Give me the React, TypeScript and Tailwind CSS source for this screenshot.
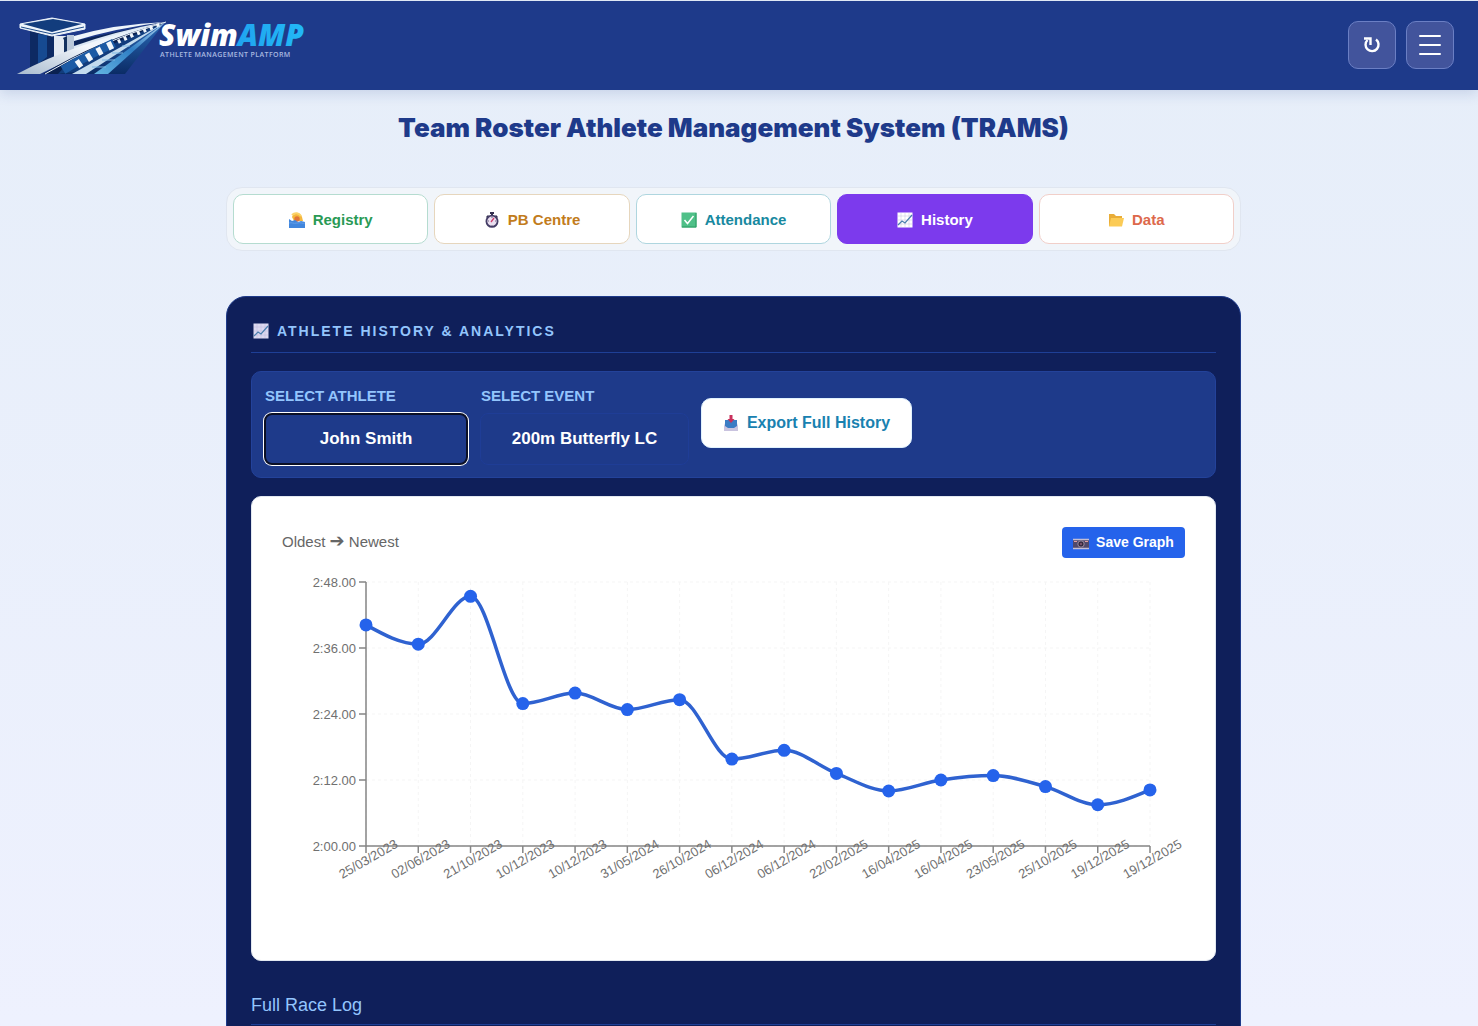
import React from 'react';
import clsx from 'clsx';

const RACES = [
  { date: '25/03/2023', seconds: 160.2 },
  { date: '02/06/2023', seconds: 156.7 },
  { date: '21/10/2023', seconds: 165.4 },
  { date: '10/12/2023', seconds: 145.9 },
  { date: '10/12/2023', seconds: 147.8 },
  { date: '31/05/2024', seconds: 144.8 },
  { date: '26/10/2024', seconds: 146.6 },
  { date: '06/12/2024', seconds: 135.8 },
  { date: '06/12/2024', seconds: 137.4 },
  { date: '22/02/2025', seconds: 133.2 },
  { date: '16/04/2025', seconds: 130.0 },
  { date: '16/04/2025', seconds: 132.0 },
  { date: '23/05/2025', seconds: 132.8 },
  { date: '25/10/2025', seconds: 130.8 },
  { date: '19/12/2025', seconds: 127.5 },
  { date: '19/12/2025', seconds: 130.2 },
];

const Y_TICKS = [
  { label: '2:48.00', seconds: 168 },
  { label: '2:36.00', seconds: 156 },
  { label: '2:24.00', seconds: 144 },
  { label: '2:12.00', seconds: 132 },
  { label: '2:00.00', seconds: 120 },
];

const PLOT = { left: 84, right: 868, top: 8, bottom: 272 };

const xAt = (i: number) => PLOT.left + (i * (PLOT.right - PLOT.left)) / (RACES.length - 1);
const yAt = (s: number) => PLOT.bottom - ((s - 120) / 48) * (PLOT.bottom - PLOT.top);

// monotone cubic, so the line never overshoots a result
function monotonePath(points: number[][]) {
  const n = points.length;
  const slope = points.slice(1).map((p, i) => (p[1] - points[i][1]) / (p[0] - points[i][0]));
  const tangent = points.map((_, i) => {
    if (i === 0 || i === n - 1) return 0;
    const a = slope[i - 1];
    const b = slope[i];
    if (a * b <= 0) return 0;
    return Math.sign(a) * Math.min(Math.abs(a), Math.abs(b), Math.abs(a + b) / 4) * 2;
  });
  tangent[0] = (3 * slope[0] - tangent[1]) / 2;
  tangent[n - 1] = (3 * slope[n - 2] - tangent[n - 2]) / 2;

  let d = `M${points[0][0]},${points[0][1]}`;
  for (let i = 1; i < n; i++) {
    const [x0, y0] = points[i - 1];
    const [x1, y1] = points[i];
    const dx = (x1 - x0) / 3;
    d += `C${x0 + dx},${y0 + dx * tangent[i - 1]},${x1 - dx},${y1 - dx * tangent[i]},${x1},${y1}`;
  }
  return d;
}

const HistoryChart: React.FC = () => {
  const points = RACES.map((race, i) => [xAt(i), yAt(race.seconds)]);
  return (
    <svg viewBox="0 0 903 356" className="mt-4 block w-full" role="img" aria-label="Race times">
      <g stroke="#f5f5f5" strokeDasharray="3 3">
        {Y_TICKS.map((t) => (
          <line key={t.label} x1={PLOT.left} x2={PLOT.right} y1={yAt(t.seconds)} y2={yAt(t.seconds)} />
        ))}
        {points.map(([x], i) => (
          <line key={i} x1={x} x2={x} y1={PLOT.top} y2={PLOT.bottom} />
        ))}
      </g>
      <g stroke="#858585" strokeWidth="1.5">
        <line x1={PLOT.left} x2={PLOT.left} y1={PLOT.top} y2={PLOT.bottom} />
        <line x1={PLOT.left} x2={PLOT.right} y1={PLOT.bottom} y2={PLOT.bottom} />
        {Y_TICKS.map((t) => (
          <line key={t.label} x1={PLOT.left - 7} x2={PLOT.left} y1={yAt(t.seconds)} y2={yAt(t.seconds)} />
        ))}
        {points.map(([x], i) => (
          <line key={i} x1={x} x2={x} y1={PLOT.bottom} y2={PLOT.bottom + 7} />
        ))}
      </g>
      <g fill="#707070" fontSize="13">
        {Y_TICKS.map((t) => (
          <text key={t.label} x={PLOT.left - 10} y={yAt(t.seconds) + 5} textAnchor="end">
            {t.label}
          </text>
        ))}
        {RACES.map((race, i) => {
          const x = xAt(i);
          return (
            <text key={i} x={x} y={290} textAnchor="middle" transform={`rotate(-30 ${x} 281)`}>
              {race.date}
            </text>
          );
        })}
      </g>
      <path d={monotonePath(points)} fill="none" stroke="#2f62d0" strokeWidth="3.5" />
      {points.map(([x, y], i) => (
        <circle key={i} cx={x} cy={y} r="6.5" fill="#2563eb" />
      ))}
    </svg>
  );
};

const Logo: React.FC = () => (
  <svg viewBox="0 3 300 66" className="h-[66px] w-[300px]" role="img" aria-label="SwimAMP">
    <defs>
      <linearGradient id="amp" x1="0" y1="0" x2="1" y2="0">
        <stop offset="0" stopColor="#1e8fe8" />
        <stop offset="1" stopColor="#22b8f6" />
      </linearGradient>
      <linearGradient id="deck" x1="0" y1="1" x2="1" y2="0">
        <stop offset="0" stopColor="#a9bccf" />
        <stop offset="0.5" stopColor="#f4f8fc" />
        <stop offset="1" stopColor="#dbe9f6" />
      </linearGradient>
      <linearGradient id="lane" x1="0" y1="1" x2="1" y2="0">
        <stop offset="0" stopColor="#63b4e2" />
        <stop offset="0.5" stopColor="#2f7ec4" />
        <stop offset="1" stopColor="#b5d8f2" />
      </linearGradient>
      <linearGradient id="water" x1="0" y1="0" x2="0" y2="1">
        <stop offset="0" stopColor="#2a6ab8" />
        <stop offset="1" stopColor="#0b2c66" />
      </linearGradient>
    </defs>
    {/* starting block */}
    <path d="M14 22v38h8l17-13V26z" fill="#0d2a63" />
    <path d="M22 25v30l9-7V26z" fill="#164a91" />
    <path d="M38 27h19v20l-19 8z" fill="#e3eaf2" />
    <path d="M51 26h7v20l-7 3z" fill="#b9c8da" />
    <path d="M47 29l4-2v17h-3V31z" fill="#12305f" />
    <path d="M4 15l32-6 33 6v5L36 27 4 19z" fill="#eef5fb" stroke="#eef5fb" />
    <path d="M7 15l30-5 29 5-30 8z" fill="#123d7d" />
    <path d="M5 18l31 7 32-7" fill="none" stroke="#1d4b89" />
    {/* lanes */}
    <path d="M149 13L109 65H38z" fill="url(#water)" />
    <path d="M58 32L148 13 60 46z" fill="#0b2559" />
    <path d="M58 27Q100 15 149 13 100 19 58 32z" fill="#eef5fb" />
    <path d="M58 37Q100 22 149 13 100 26 58 41z" fill="#dce8f4" />
    <path d="M1 65Q60 33 150 13 70 42 24 65z" fill="url(#deck)" />
    <path d="M27 65Q80 32 150 13L46 65z" fill="#0a2150" />
    <path d="M29 65Q82 33 150 13" fill="none" stroke="#e7f0f8" />
    <path d="M42 65L52 54 104 32 146 14 110 36 66 62z" fill="#123d7d" />
    <path d="M47 61Q70 47 98 34" fill="none" stroke="#1c5ba5" strokeWidth="9" />
    <path d="M61 56Q78 44 100 34" fill="none" stroke="#f2f7fb" strokeWidth="8" strokeDasharray="5 7" />
    <path d="M102 33Q120 24 146 15" fill="none" stroke="#f2f7fb" strokeWidth="4" strokeDasharray="3 4" />
    <path d="M56 65L150 13 70 65z" fill="#c3dbee" />
    <path d="M78 65L150 13 92 65z" fill="url(#lane)" />
    <path d="M76 58h14M86 51h13M96 44h11M106 37h8" stroke="#7db9e4" />
    {/* wordmark */}
    <g fontFamily="'Open Sans', sans-serif" fontWeight="800" fontStyle="italic" fontSize="30">
      <text x="143" y="37" fill="#ffffff">
        Swim<tspan fill="url(#amp)">AMP</tspan>
      </text>
    </g>
    <text x="144" y="48" fill="#a9b9e0" fontFamily="'Open Sans', sans-serif" fontWeight="600" fontSize="7" letterSpacing="0.4">
      ATHLETE MANAGEMENT PLATFORM
    </text>
  </svg>
);

const SwimmerIcon = () => (
  <svg viewBox="0 0 16 16" className="h-4 w-4" aria-hidden="true">
    <path d="M3 5c1-4 8-5 10 0l1 4H5z" fill="#f5b83d" />
    <path d="M3 3c3-3 7-2 9 1" fill="none" stroke="#fbd46b" strokeWidth="2" />
    <circle cx="8" cy="7" r="2.7" fill="#e0743a" />
    <path d="M0 7l3 2 3-1 3 2 3-1 4 1v6H0z" fill="#4186dd" />
    <path d="M0 11c3-1 4 1 8 0s5 1 8 0" fill="none" stroke="#639fe8" />
  </svg>
);

const StopwatchIcon = () => (
  <svg viewBox="0 0 16 16" className="h-4 w-4" aria-hidden="true">
    <path d="M6 0h4v2H6zM7 2h2v2H7zM12 3l2 2-1 1-2-2zM4 3L2 5l1 1 2-2z" fill="#34304f" />
    <circle cx="8" cy="9.3" r="5.6" fill="#eadff0" stroke="#443d66" strokeWidth="1.8" />
    <path d="M8 5v1M8 13v1M4 9h1M11 9h1" stroke="#6c6482" />
    <path d="M7 10l3-4" stroke="#cf3d6c" strokeWidth="1.3" />
  </svg>
);

const CheckIcon = () => (
  <svg viewBox="0 0 16 16" className="h-4 w-4" aria-hidden="true">
    <rect width="15" height="15" x="0.5" y="0.5" fill="#4fc088" />
    <path d="M1 15h14V1" fill="none" stroke="#2b9b62" />
    <path d="M3.500 8l3 3.500L12.500 4" fill="none" stroke="#fff" strokeWidth="1.5" />
  </svg>
);

const TrendIcon = ({ className }: { className?: string }) => (
  <svg viewBox="0 0 16 16" className={clsx('h-4 w-4', className)} aria-hidden="true">
    <rect width="15" height="15" x="0.5" y="0.5" fill="currentColor" />
    <path d="M4 1v14M8 1v14M12 1v14M1 4h14M1 8h14M1 12h14" stroke="#b9b3d6" strokeWidth="0.4" />
    <path d="M1 13l4-4 3 2 7-8" fill="none" stroke="#4a7fae" strokeWidth="1.2" />
  </svg>
);

const FolderIcon = () => (
  <svg viewBox="0 0 16 16" className="h-4 w-4" aria-hidden="true">
    <path d="M1 2h5l2 2h6v10H1z" fill="#e9ad38" />
    <path d="M3 6h13l-2 8.500H1z" fill="#fbcb56" />
  </svg>
);

const InboxIcon = () => (
  <svg viewBox="0 0 16 16" className="h-4 w-4" aria-hidden="true">
    <path d="M3 5h10l2 6v5H1v-5z" fill="#c9c3df" />
    <path d="M2 5h12v6l-3 2H5l-3-2z" fill="#3b7cc4" />
    <path d="M6.500 0h3v4h2L8 8 4.500 4h2z" fill="#c9315c" />
  </svg>
);

const CameraIcon = () => (
  <svg viewBox="0 0 16 16" className="h-4 w-4" aria-hidden="true">
    <path d="M0 5h16v10H0z" fill="#51496a" />
    <path d="M0 5.500h16M0 14.500h16" stroke="#c5bfd4" strokeWidth="1.3" />
    <path d="M1 7h3v1H1zM12 7h3v1h-3z" fill="#e6a0a0" />
    <circle cx="8" cy="10" r="3.2" fill="#33293c" stroke="#9d8ea5" />
    <circle cx="8" cy="10" r="1.2" fill="#7a506a" />
  </svg>
);

const TABS = [
  { label: 'Registry', icon: <SwimmerIcon />, className: 'border-[#b5dcd0] bg-white text-[#2a9a55]' },
  { label: 'PB Centre', icon: <StopwatchIcon />, className: 'border-[#e6d6bd] bg-white text-[#c27c1c]' },
  { label: 'Attendance', icon: <CheckIcon />, className: 'border-[#afd6df] bg-white text-[#1889a0]' },
  { label: 'History', icon: <TrendIcon className="text-white" />, className: 'border-[#7c3aed] bg-[#7c3aed] text-white' },
  { label: 'Data', icon: <FolderIcon />, className: 'border-[#f1cfc9] bg-white text-[#dd694b]' },
];

const iconButton =
  'flex h-12 w-12 items-center justify-center rounded-[10px] border border-[#6b7fc4] bg-[#42549c] text-white';
const selectClass =
  'appearance-none rounded-lg border bg-[#1e3a8a] text-center text-[17px] font-bold text-white [text-align-last:center]';

const App: React.FC = () => {
  return (
    <div className="h-screen overflow-hidden bg-linear-to-b from-[#e6eef9] to-[#eef1fe] font-['Liberation_Sans',Arial,sans-serif]">
      <header className="flex h-[90px] items-center justify-between border-t border-[#dfe8f5] bg-[#1e3a8a] pr-6 pb-[2px] pl-4 shadow-[0_4px_12px_rgba(30,58,138,0.15)]">
        <Logo />
        <div className="flex gap-[10px]">
          <button className={iconButton} aria-label="Refresh">
            <svg viewBox="0 0 20 20" className="h-5 w-5" fill="none" stroke="currentColor" strokeWidth="2.4">
              <path d="M14 4.500a6.500 6.500 0 1 1-8.500 .5" />
              <path d="M2 3.500h6.500V10" />
            </svg>
          </button>
          <button className={iconButton} aria-label="Menu">
            <svg viewBox="0 0 22 20" className="h-5 w-[22px]" stroke="currentColor" strokeWidth="2" strokeLinecap="round">
              <path d="M1 1h20M1 10h20M1 19h20" />
            </svg>
          </button>
        </div>
      </header>

      <main className="mx-auto box-content max-w-[1015px] pr-[11px]">
        <h1 className="pt-[22px] text-center font-[Inter,sans-serif] text-[26px] leading-8 font-black text-[#1e3a8a]">
          Team Roster Athlete Management System (TRAMS)
        </h1>

        <nav className="mt-[43px] grid grid-cols-5 gap-[6px] rounded-2xl border border-[#e0e6f0] bg-[#f1f5fa] p-[6px]">
          {TABS.map((tab) => (
            <button
              key={tab.label}
              className={clsx(
                'flex h-[50px] items-center justify-center gap-2 rounded-[10px] border pt-[2px] text-[15px] font-bold',
                tab.className,
              )}
            >
              {tab.icon}
              {tab.label}
            </button>
          ))}
        </nav>

        <section className="mt-[45px] h-[800px] rounded-[20px] border border-[#1e3a8a] bg-[#0f1f5a] px-6 pt-6">
          <h2 className="flex items-center gap-2 border-b border-[#1e3f96] pb-[11px] pl-[2px] text-sm font-bold tracking-[2px] text-[#93c5fd]">
            <TrendIcon className="text-[#dcd9f0]" />
            ATHLETE HISTORY &amp; ANALYTICS
          </h2>

          <div className="mt-[18px] flex h-[107px] items-start gap-3 rounded-[10px] border border-[#23429a] bg-[#1e3a8a] px-3 py-[14px]">
            <div className="flex w-[204px] flex-col gap-[7px]">
              <label htmlFor="athlete" className="pl-px text-[15px] leading-5 font-bold text-[#93c5fd]">
                SELECT ATHLETE
              </label>
              <select id="athlete" className={clsx(selectClass, 'h-[52px] border-2 border-[#0b1026] ring-1 ring-white')}>
                <option>John Smith</option>
              </select>
            </div>
            <div className="flex w-[209px] flex-col gap-[7px]">
              <label htmlFor="event" className="pl-px text-[15px] leading-5 font-bold text-[#93c5fd]">
                SELECT EVENT
              </label>
              <select id="event" className={clsx(selectClass, 'h-[52px] border-[#1f3d96]')}>
                <option>200m Butterfly LC</option>
              </select>
            </div>
            <button className="mt-3 flex h-[50px] w-[211px] items-center justify-center gap-2 rounded-[10px] border border-[#e0f2fe] bg-white text-base font-bold text-[#1981b0]">
              <InboxIcon />
              Export Full History
            </button>
          </div>

          <div className="mt-[18px] rounded-[10px] border border-[#e2e8f0] bg-white p-[30px]">
            <div className="flex h-[31px] items-center justify-between">
              <p className="text-[15px] text-[#666]">
                Oldest <span className="font-['DejaVu_Sans',sans-serif] text-lg leading-5">➔</span> Newest
              </p>
              <button className="flex h-[31px] w-[123px] items-center justify-center gap-[7px] rounded bg-[#2563eb] pb-px text-sm font-bold text-white">
                <CameraIcon />
                Save Graph
              </button>
            </div>
            <HistoryChart />
          </div>

          <h3 className="mt-8 border-b border-[#1e3f96] pb-[7px] text-lg leading-6 text-[#93c5fd]">Full Race Log</h3>
        </section>
      </main>
    </div>
  );
};

export default App;
